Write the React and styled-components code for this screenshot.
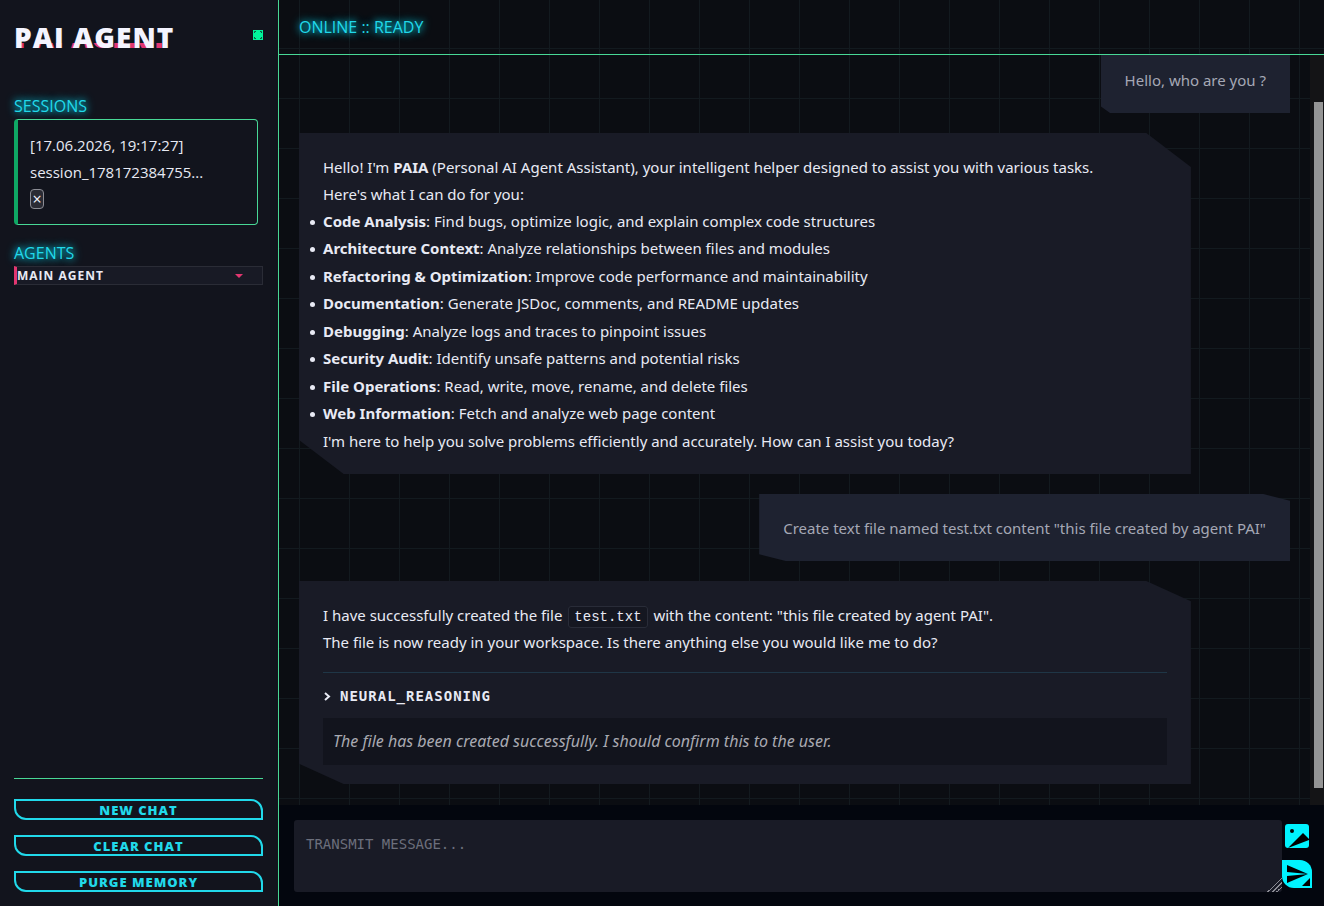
import React from "react";
import styled, { createGlobalStyle } from "styled-components";

const capabilities = [
  ["Code Analysis", "Find bugs, optimize logic, and explain complex code structures"],
  ["Architecture Context", "Analyze relationships between files and modules"],
  ["Refactoring & Optimization", "Improve code performance and maintainability"],
  ["Documentation", "Generate JSDoc, comments, and README updates"],
  ["Debugging", "Analyze logs and traces to pinpoint issues"],
  ["Security Audit", "Identify unsafe patterns and potential risks"],
  ["File Operations", "Read, write, move, rename, and delete files"],
  ["Web Information", "Fetch and analyze web page content"],
];

const App = () => {
  return (
    <>
      <GlobalStyle />
      <Layout>
        <Sidebar>
          <Brand>
            <Logo data-text="PAI AGENT">PAI AGENT</Logo>
            <StatusDot viewBox="0 0 10 10" role="img" aria-label="connected">
              <rect width="10" height="10" fill="#00f59b" />
              <path
                d="M1.500 3V1.500H3M7 1.500h1.500V3M8.500 7v1.500H7M3 8.500H1.500V7"
                fill="none"
                stroke="#0b5a40"
              />
            </StatusDot>
          </Brand>
          <SectionTitle>SESSIONS</SectionTitle>
          <Session>
            <span>[17.06.2026, 19:17:27]</span>
            <span>session_178172384755...</span>
            <CloseButton type="button" aria-label="Delete session">
              ×
            </CloseButton>
          </Session>
          <SectionTitle as="label" htmlFor="agent">
            AGENTS
          </SectionTitle>
          <SelectWrap>
            <AgentSelect id="agent" defaultValue="main">
              <option value="main">MAIN AGENT</option>
            </AgentSelect>
            <svg width="8" height="4" viewBox="0 0 8 4" aria-hidden="true">
              <path d="M0 0h8L4 4z" fill="#e23670" />
            </svg>
          </SelectWrap>
          <Actions>
            <ActionButton type="button">NEW CHAT</ActionButton>
            <ActionButton type="button">CLEAR CHAT</ActionButton>
            <ActionButton type="button">PURGE MEMORY</ActionButton>
          </Actions>
        </Sidebar>

        <Main>
          <Header>
            <SectionTitle as="h1">ONLINE :: READY</SectionTitle>
          </Header>
          <ChatArea>
            <Messages>
              <Message $user>Hello, who are you ?</Message>
              <Message>
                <p>
                  Hello! I'm <strong>PAIA</strong> (Personal AI Agent Assistant), your
                  intelligent helper designed to assist you with various tasks.
                  <br />
                  Here's what I can do for you:
                </p>
                <Capabilities>
                  {capabilities.map(([name, text]) => (
                    <li key={name}>
                      <strong>{name}</strong>: {text}
                    </li>
                  ))}
                </Capabilities>
                <p>
                  I'm here to help you solve problems efficiently and accurately. How can I
                  assist you today?
                </p>
              </Message>
              <Message $user>
                Create text file named test.txt content "this file created by agent PAI"
              </Message>
              <Message>
                <p>
                  I have successfully created the file <Code>test.txt</Code> with the
                  content: "this file created by agent PAI".
                  <br />
                  The file is now ready in your workspace. Is there anything else you would
                  like me to do?
                </p>
                <Reasoning open>
                  <summary>
                    <svg width="9" height="9" viewBox="0 0 9 9" aria-hidden="true">
                      <path
                        d="M2 1l4 3.500-4 3.500"
                        fill="none"
                        stroke="currentColor"
                        strokeWidth="2"
                      />
                    </svg>
                    NEURAL_REASONING
                  </summary>
                  <p>The file has been created successfully. I should confirm this to the user.</p>
                </Reasoning>
              </Message>
            </Messages>
            <ScrollTrack aria-hidden="true">
              <ScrollThumb />
            </ScrollTrack>
          </ChatArea>
          <Composer>
            <MessageInput aria-label="Message" placeholder="TRANSMIT MESSAGE..." />
            <Tools>
              <ImageButton type="button" aria-label="Attach image">
                <svg width="24" height="24" viewBox="0 0 24 24" aria-hidden="true">
                  <circle cx="7" cy="7" r="2" />
                  <path d="M3 24L18 9l6 6v1z" />
                </svg>
              </ImageButton>
              <SendButton type="button" aria-label="Send message">
                <svg width="30" height="28" viewBox="0 0 30 28" aria-hidden="true">
                  <path d="M5 5l21 9-21-2z" />
                  <path d="M5 16l21-2-21 9z" />
                  <path d="M28 18v8h-8z" />
                </svg>
              </SendButton>
            </Tools>
          </Composer>
        </Main>
      </Layout>
    </>
  );
};

const GlobalStyle = createGlobalStyle`
  *,
  *::before,
  *::after {
    box-sizing: border-box;
  }
  body {
    margin: 0;
    background: #0b0d12;
    color: #e8eaf4;
    font-family: "Open Sans", "Noto Sans", sans-serif;
    font-size: 16px;
  }
  h1, h2, p, ul {
    margin: 0;
    padding: 0;
  }
  button, select, textarea {
    font: inherit;
  }
`;

const Layout = styled.div`
  display: grid;
  grid-template-columns: 279px minmax(0, 1fr);
  height: 100vh;
`;

const Sidebar = styled.aside`
  display: flex;
  flex-direction: column;
  padding: 14px 15px 14px 14px;
  background: #12141d;
  border-right: 1px solid #48d896;
`;

const Brand = styled.div`
  display: flex;
  align-items: flex-start;
  justify-content: space-between;
  height: 80px;
`;

const Logo = styled.div`
  position: relative;
  color: #f4f4ff;
  font-size: 28px;
  font-weight: 800;
  letter-spacing: 1px;
  line-height: 46px;
  white-space: nowrap;
  isolation: isolate;
  &::before,
  &::after {
    content: attr(data-text);
    position: absolute;
    z-index: -1;
    top: 0;
    left: 2px;
    color: #e23670;
    letter-spacing: 0;
    clip-path: inset(29px 0 0 0);
  }
  &::before {
    top: -1px;
    left: -1px;
    color: #14a57c;
    clip-path: inset(0 0 32px 0);
  }
`;

const StatusDot = styled.svg`
  width: 10px;
  height: 10px;
  margin-top: 16px;
`;

const SectionTitle = styled.h2`
  color: #21d9ea;
  font-size: 16px;
  font-weight: 400;
  line-height: 25px;
  text-shadow: 0 0 10px #00e5ff, 0 0 6px #00e5ff80;
`;

const Session = styled.div`
  display: flex;
  flex-direction: column;
  align-items: flex-start;
  margin: 0 5px 16px 0;
  padding: 12px;
  border: 1px solid #48d896;
  border-left: 4px solid #0fa865;
  border-radius: 4px;
  font-size: 15px;
  line-height: 27px;
`;

const CloseButton = styled.button`
  width: 14px;
  height: 20px;
  margin: 3px 0;
  padding: 0;
  border: 1px solid #8b8c94;
  border-radius: 4px;
  background: #2a2b34;
  color: #f4f4ff;
  font-size: 16px;
  line-height: 16px;
`;

const SelectWrap = styled.div`
  display: flex;
  align-items: center;
  padding-right: 19px;
  border: 1px solid #2a2c36;
  border-left: 3px solid #e23670;
  background: #181a25;
`;

const AgentSelect = styled.select`
  flex: 1;
  height: 17px;
  padding: 0;
  appearance: none;
  border: 0;
  background: transparent;
  color: #e8eaf4;
  font-size: 12px;
  font-weight: 700;
  letter-spacing: 1px;
`;

const Actions = styled.div`
  display: flex;
  flex-direction: column;
  gap: 15px;
  margin-top: auto;
  padding-top: 20px;
  border-top: 1px solid #48d896;
`;

const ActionButton = styled.button`
  height: 21px;
  padding: 0;
  border: 2px solid #21d9ea;
  border-radius: 0 12px 0 12px;
  background: transparent;
  color: #21d9ea;
  font-size: 13px;
  font-weight: 800;
  letter-spacing: 1px;
  line-height: 18px;
`;

const Main = styled.main`
  display: flex;
  flex-direction: column;
  min-width: 0;
  min-height: 0;
  background-color: #0b0d12;
  background-image: linear-gradient(#131a1f 1px, transparent 1px),
    linear-gradient(90deg, #131a1f 1px, transparent 1px);
  background-size: 50px 50px;
  background-position: 20px 48px;
`;

const Header = styled.header`
  padding: 15px 20px 14px;
  border-bottom: 1px solid #48d896;
`;

const ChatArea = styled.div`
  display: flex;
  flex: 1;
  min-height: 0;
`;

const Messages = styled.div`
  display: flex;
  flex: 1;
  flex-direction: column;
  justify-content: flex-end;
  gap: 20px;
  min-width: 0;
  padding: 0 20px 21px;
  overflow: hidden;
`;

const Message = styled.article`
  flex: none;
  align-self: ${(props) => (props.$user ? "flex-end" : "flex-start")};
  width: ${(props) => (props.$user ? "auto" : "90%")};
  max-width: 90%;
  padding: 21px 24px 19px;
  background: ${(props) => (props.$user ? "#1e2230" : "#191b26")};
  color: ${(props) => (props.$user ? "#a5a8b5" : "#e8eaf4")};
  font-family: "Noto Sans", "Open Sans", sans-serif;
  font-size: 15px;
  line-height: 27px;
  clip-path: polygon(0 0, 95% 0, 100% 10%, 100% 100%, 5% 100%, 0 90%);
`;

const Capabilities = styled.ul`
  margin-bottom: 1px;
  list-style: none;
  li:nth-child(2n + 3) {
    margin-top: 1px;
  }
  /* bullet hangs in the bubble padding */
  li::before {
    content: "";
    display: inline-block;
    width: 5px;
    height: 5px;
    margin: 0 8px 0 -13px;
    border-radius: 50%;
    background: currentColor;
    vertical-align: middle;
  }
`;

const Code = styled.code`
  margin: 0 2px;
  padding: 2px 5px;
  border: 1px solid #292c38;
  border-radius: 3px;
  background: #151721;
  font-family: "Liberation Mono", monospace;
  font-size: 14px;
  line-height: 1;
`;

const Reasoning = styled.details`
  margin-top: 16px;
  padding-top: 11px;
  border-top: 1px solid #1f3646;
  summary {
    display: flex;
    align-items: center;
    gap: 8px;
    font-family: "DejaVu Sans Mono", monospace;
    font-size: 14px;
    font-weight: 700;
    letter-spacing: 1px;
    line-height: 24px;
  }
  p {
    margin-top: 10px;
    padding: 10px;
    background: #12141d;
    color: #a9aab2;
    font-style: italic;
    font-size: 16px;
  }
`;

const ScrollTrack = styled.div`
  display: flex;
  justify-content: flex-end;
  width: 14px;
  padding: 47px 1px 17px 4px;
  background: #141416;
`;

const ScrollThumb = styled.div`
  flex: 1;
  background: #959595;
`;

const Composer = styled.form`
  display: flex;
  padding: 15px 12px 14px 15px;
  background: #03060e;
`;

const MessageInput = styled.textarea`
  flex: 1;
  height: 72px;
  padding: 12px;
  border: 0;
  border-radius: 3px;
  background: #191b26;
  color: #e8eaf4;
  font-family: "DejaVu Sans Mono", monospace;
  font-size: 14px;
  line-height: 25px;
  &::placeholder {
    color: #6c6f7c;
  }
  &::-webkit-resizer {
    background: linear-gradient(
      135deg,
      transparent 50%,
      #8b8c94 50% 56%,
      transparent 56% 65%,
      #8b8c94 65% 71%,
      transparent 71% 80%,
      #8b8c94 80% 86%,
      transparent 86%
    );
  }
`;

const Tools = styled.div`
  display: flex;
  flex-direction: column;
  align-items: center;
  gap: 12px;
  padding-top: 4px;
`;

const ImageButton = styled.button`
  display: flex;
  width: 24px;
  height: 24px;
  padding: 0;
  overflow: hidden;
  border: 0;
  border-radius: 3px;
  background: #00f3ff;
`;

const SendButton = styled(ImageButton)`
  width: 30px;
  height: 28px;
  border-radius: 0 12px 0 12px;
`;

export default App;
